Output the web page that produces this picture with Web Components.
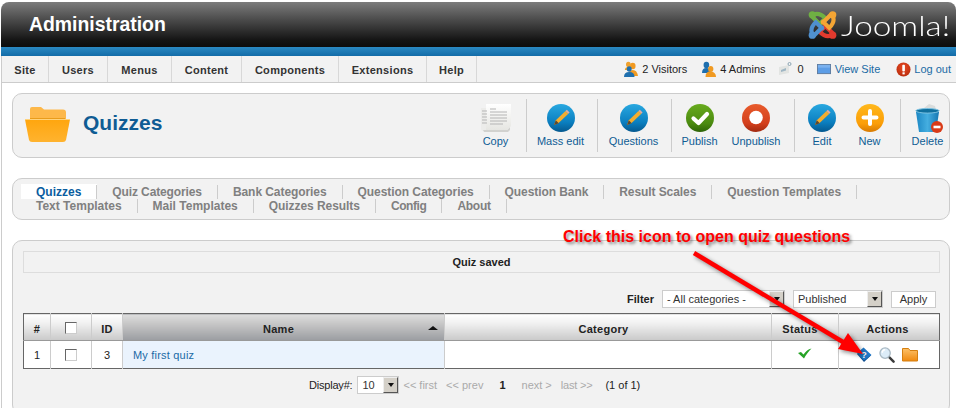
<!DOCTYPE html>
<html><head><meta charset="utf-8">
<style>
html,body{margin:0;padding:0;background:#fff}
body{width:957px;height:408px;overflow:hidden;font-family:"Liberation Sans",Arial,sans-serif}
</style></head>
<body>
<x-app></x-app>
<script>
const PIECE=c=>`<g stroke="${c}"><path d="M6 5Q12 2 18.500 8.500L12 15"/><path d="M5 7L13 15"/><circle cx="5" cy="5" r="3.800" fill="${c}" stroke="none"/></g>`;
const ICONS={
 pencilBall:`<svg width="32" height="30" viewBox="0 0 32 30"><defs><linearGradient id="b" x1="0" y1="0" x2="0" y2="1"><stop offset="0" stop-color="#29a8e0"/><stop offset=".65" stop-color="#0b7fc0"/><stop offset="1" stop-color="#05598f"/></linearGradient></defs><circle cx="16" cy="15" r="14" fill="url(#b)"/><path d="M9 22l1.800-4.800 9.700-9.200 2.800 2.800-9.700 9.200z" fill="#f3ad2f"/><path d="M20.500 8l1.300-1.300 2.800 2.800-1.300 1.300z" fill="#e9a9a0"/><path d="M9 22l1.800-4.800 3 3z" fill="#5d4a32"/></svg>`,
 publish:`<svg width="32" height="30" viewBox="0 0 32 30"><defs><linearGradient id="g" x1="0" y1="0" x2="0" y2="1"><stop offset="0" stop-color="#68ab1e"/><stop offset=".7" stop-color="#4b8a10"/><stop offset="1" stop-color="#2e6407"/></linearGradient></defs><circle cx="16" cy="15" r="14" fill="url(#g)"/><path d="M9.500 15.500l5 4.500 8.500-9" fill="none" stroke="#fff" stroke-width="4.200" stroke-linecap="round" stroke-linejoin="round"/></svg>`,
 unpublish:`<svg width="32" height="30" viewBox="0 0 32 30"><defs><linearGradient id="r" x1="0" y1="0" x2="0" y2="1"><stop offset="0" stop-color="#e85b2c"/><stop offset=".7" stop-color="#d33f1c"/><stop offset="1" stop-color="#a12a10"/></linearGradient></defs><circle cx="16" cy="15" r="14" fill="url(#r)"/><circle cx="16" cy="14.500" r="6.800" fill="#fff"/></svg>`,
 newBall:`<svg width="32" height="30" viewBox="0 0 32 30"><defs><linearGradient id="o" x1="0" y1="0" x2="0" y2="1"><stop offset="0" stop-color="#ffb81c"/><stop offset=".7" stop-color="#fb9e08"/><stop offset="1" stop-color="#d87b02"/></linearGradient></defs><circle cx="16" cy="15" r="14" fill="url(#o)"/><path d="M16 8v13M9.500 14.500h13" stroke="#fff" stroke-width="4" stroke-linecap="round"/></svg>`,
 copy:`<svg width="32" height="30" viewBox="0 0 32 30"><defs><linearGradient id="s" x1="0" y1="0" x2="0" y2="1"><stop offset="0" stop-color="#fff"/><stop offset="1" stop-color="#e6e6e2"/></linearGradient></defs><path d="M1 5h8v23H3q-2 0-2-2z" fill="#ececea"/><path d="M3 27h24l3-3v3l-2 2H4z" fill="#d2d2cf"/><path d="M6 1h25v22l-4 4H6z" fill="url(#s)"/><path d="M2 8h5M2 11h5M2 14h5M2 17h5M2 20h5" stroke="#b5b5b5"/><path d="M10 6h6M10 9h17M10 12h17M10 15h17M10 18h17M10 21h13" stroke="#b4b4b4"/></svg>`,
 trash:`<svg width="32" height="30" viewBox="0 0 32 30"><defs><linearGradient id="t" x1="0" y1="0" x2="1" y2="0"><stop offset="0" stop-color="#1c87c4"/><stop offset=".5" stop-color="#45aee0"/><stop offset="1" stop-color="#1677b2"/></linearGradient></defs><path d="M12 5l5-4 6 2 1 4H12z" fill="#d9dcdc"/><path d="M4 9h23l-3 20H7z" fill="url(#t)"/><ellipse cx="15.500" cy="7.800" rx="11.700" ry="2.300" fill="#0f6f9e" stroke="#7cc2e2"/><circle cx="25" cy="24" r="6" fill="#d93a17"/><rect x="21.500" y="22.700" width="7" height="2.600" fill="#fff"/></svg>`,
 folderBig:`<svg width="45" height="37" viewBox="0 0 45 37"><defs><linearGradient id="f" x1="0" y1="0" x2="0" y2="1"><stop offset="0" stop-color="#ffa60e"/><stop offset="1" stop-color="#ffb32f"/></linearGradient></defs><path d="M5 14V3q0-2 2-2h9l3 2.500h19q3 0 3 3V14z" fill="#fdb84a"/><path d="M5 12h35v3H5z" fill="#e99c1b"/><path d="M0 13.500h45L41 34q-.5 2-3 2H7q-2.500 0-3-2z" fill="url(#f)"/><path d="M0 13.500h45" stroke="#ffd27b"/></svg>`,
 joomla:`<svg width="31" height="30" viewBox="0 0 31 31" fill="none" stroke-width="4.300" stroke-linecap="round">${PIECE('#6fb043')}<g transform="rotate(180 15.500 15.500)">${PIECE('#e23a2e')}</g><g transform="rotate(270 15.500 15.500)">${PIECE('#4f90cf')}</g><g transform="rotate(90 15.500 15.500)">${PIECE('#f4a534')}</g></svg>`,
 users:`<svg width="14" height="16" viewBox="0 0 16 16" preserveAspectRatio="none"><circle cx="10" cy="5" r="3.200" fill="#f09a22"/><path d="M5 15q0-6 5-6t6 6z" fill="#f09a22"/><circle cx="5" cy="3.500" r="2.700" fill="#f0a12e"/><path d="M1 9q0-3 4-3l2 3z" fill="#e5a02e"/><circle cx="6" cy="8" r="2.800" fill="#1f6fae"/><path d="M0 16q0-5 6-5t6 5z" fill="#1f6fae"/></svg>`,
 admins:`<svg width="14" height="16" viewBox="0 0 16 16" preserveAspectRatio="none"><circle cx="5" cy="4" r="3.200" fill="#1f6fae"/><path d="M0 12q0-5 5-5t5 5z" fill="#1f6fae"/><circle cx="10" cy="8" r="3" fill="#f09a22"/><path d="M4 16q0-6 6-5.500t6 5.500z" fill="#f09a22"/></svg>`,
 msg:`<svg width="15" height="14" viewBox="0 0 15 14"><path d="M1 5l10-2v8l-10 2z" fill="#e2e4e2"/><path d="M3 8l5-2v2.500l-5 1.500z" fill="#9fb6c4"/><circle cx="11.500" cy="2" r="1.500" fill="none" stroke="#8ca5b3"/></svg>`,
 view:`<svg width="14" height="11" viewBox="0 0 15 12" preserveAspectRatio="none"><rect x=".5" y=".5" width="14" height="10" fill="#5c9de6" stroke="#5d7b9f"/><path d="M1 1h13v3H1z" fill="#7ab1ee"/></svg>`,
 logout:`<svg width="15" height="15" viewBox="0 0 16 16"><defs><radialGradient id="l" cx=".5" cy=".35" r=".7"><stop offset="0" stop-color="#e84a24"/><stop offset="1" stop-color="#b72b0b"/></radialGradient></defs><circle cx="8" cy="8" r="7.500" fill="url(#l)"/><rect x="6.700" y="3" width="2.800" height="7" rx="1" fill="#fff"/><rect x="6.900" y="11" width="2.400" height="2.200" fill="#fff"/></svg>`,
 check:`<svg width="14" height="11" viewBox="0 0 14 11"><path d="M0 5l3-1 2.500 2.500C8 3 10 1.500 13.500.5 10.500 3.500 8 6.500 6 10.500z" fill="#27a327"/></svg>`,
 book:`<svg width="16" height="16" viewBox="0 0 16 16"><path d="M1 7L8 1.500l7 7L8 15z" fill="#0f4d8d"/><path d="M1 6L7.500 0.500 15.500 8 8 13.500z" fill="#1f78c8"/><text x="8" y="11" font-family="Liberation Sans" font-size="9" font-weight="700" fill="#fff" text-anchor="middle">?</text></svg>`,
 magnifier:`<svg width="16" height="16" viewBox="0 0 17 17"><path d="M10.500 10.500l5 5" stroke="#3a3a3a" stroke-width="2.600" stroke-linecap="round"/><circle cx="6.500" cy="6.500" r="5.500" fill="#dcecf8" stroke="#a9b9c4" stroke-width="1.400"/><path d="M3.500 6a3 3 0 0 1 3-3" stroke="#fff" stroke-width="1.500" fill="none"/></svg>`,
 folder:`<svg width="16" height="15" viewBox="0 0 16 15"><defs><linearGradient id="h" x1="0" y1="0" x2="0" y2="1"><stop offset="0" stop-color="#fdc168"/><stop offset="1" stop-color="#f0890e"/></linearGradient></defs><path d="M.5 14V1.500h6l1.500 2h7.500V14z" fill="url(#h)" stroke="#d57f10"/></svg>`
};
function def(name,html,extra){
  const t=document.createElement('template');t.innerHTML=html;
  customElements.define(name,class extends HTMLElement{
    constructor(){super();this.attachShadow({mode:'open'}).appendChild(t.content.cloneNode(true));}
    connectedCallback(){extra&&extra.call(this)}
  });
}
def('x-icon',`<style>:host{display:inline-flex;line-height:0}</style><span id="i" style="display:inline-flex"></span>`,function(){
  this.shadowRoot.getElementById('i').innerHTML=ICONS[this.getAttribute('name')];
});
def('x-header',`<style>
:host{display:flex;align-items:center;justify-content:space-between;height:45px;border-radius:8px 8px 0 0;
background:linear-gradient(#7c7c7c,#4a4a4a 40%,#141414 85%,#0c0c0c);padding:0 6px 0 28px;box-sizing:border-box}
h1{margin:0 0 2px;font:700 19.400px/22px "Liberation Sans",sans-serif;color:#fff}
.logo{display:flex;align-items:center;gap:3px}
.t{display:block;width:109px;font:300 28px/30px Lato,"Open Sans",sans-serif;color:#fff;white-space:nowrap;transform:scaleX(1.19);transform-origin:left center}
</style><h1>Administration</h1><div class="logo"><x-icon name="joomla"></x-icon><span class="t">Joomla!</span></div>`);
def('x-band',`<style>:host{display:block;height:9px;background:linear-gradient(#2a89c2,#136ca8)}</style>`);
def('x-menubar',`<style>
:host{display:flex;justify-content:space-between;height:26px;background:#f2f2f2;border-bottom:1px solid #ccc;border-left:1px solid #ccc}
.l{display:flex}.r{display:flex;align-items:center;padding-right:5px}
</style><div class="l"><slot name="m"></slot></div><div class="r"><slot name="s"></slot></div>`);
def('x-mi',`<style>:host{display:block;box-sizing:border-box;text-align:center;border-right:1px solid #d8d8d8;font:700 11px/28px "Liberation Sans",sans-serif;letter-spacing:.3px;color:#333}</style><slot></slot>`);
def('x-st',`<style>:host{display:inline-flex;align-items:center;gap:4px;font:11px/14px "Liberation Sans",sans-serif;color:#222}
:host([link]){color:#1a6aa5}</style><slot></slot>`);
def('x-panel',`<style>:host{display:block;box-sizing:border-box;width:938px;background:#f2f2f2;border:1px solid #ccc;border-radius:10px;margin-left:10px}</style><slot></slot>`);
def('x-toolbar',`<style>:host{display:flex;align-items:flex-start;height:63px;box-sizing:border-box;padding:5px 0 0 12px}
.t{display:flex;align-items:flex-start;gap:13px;flex:1}
h2{margin:11px 0 0;font:700 21px/26px "Liberation Sans",sans-serif;color:#0f5c94}
.i{display:flex;margin-top:7px}
.tools{display:flex}
</style><div class="t"><span class="i"><x-icon name="folderBig"></x-icon></span><h2>Quizzes</h2></div><div class="tools"><slot></slot></div>`);
def('x-tool',`<style>:host{display:flex;flex-direction:column;align-items:center;box-sizing:border-box;height:53px;padding-top:4px;font:11px/12px "Liberation Sans",sans-serif;color:#0f5c94;white-space:nowrap}
:host([sep]){border-right:1px solid #ccc}
.l{margin-top:2px}</style><slot name="i"></slot><span class="l"><slot></slot></span>`);
def('x-tabs',`<style>:host{display:flex;flex-wrap:wrap;align-content:flex-start;height:40px;box-sizing:border-box;padding:6px 40px 0 8px}</style><slot></slot>`);
def('x-tab',`<style>:host{display:block;padding:0 15px;height:14px;border-right:1px solid #ccc;font:700 12px/14px "Liberation Sans",sans-serif;color:#808080;white-space:nowrap}
:host([active]){background:#fff;color:#0b5da0;box-shadow:0 -1px 0 #fff}</style><slot></slot>`);
def('x-msg',`<style>:host{display:block;height:22px;box-sizing:border-box;margin:10px 9px 0 10px;background:#f2f2f2;border:1px solid #ddd;text-align:center;font:700 11px/21px "Liberation Sans",sans-serif;color:#222}</style><slot></slot>`);
def('x-select',`<style>:host{display:inline-flex;align-items:center;justify-content:space-between;box-sizing:border-box;height:18px;background:#fff;border:1px solid #ccc;padding:0 0 0 4px;font:11px/16px "Liberation Sans",sans-serif;color:#333}
b{display:flex;align-items:center;justify-content:center;width:15px;height:16px;box-sizing:border-box;background:#d4d0c8;border:1px solid;border-color:#eee #555 #555 #eee}
i{display:block;border:3px solid transparent;border-top:4px solid #111;border-bottom:0}</style><span><slot></slot></span><b><i></i></b>`);
def('x-filter',`<style>:host{display:flex;align-items:center;justify-content:flex-end;height:18px;margin:17px 13px 5px 0}
.f{font:700 11px/14px "Liberation Sans",sans-serif;color:#222;margin-right:8px}
.a{box-sizing:border-box;width:45px;height:17px;margin-left:8px;background:#fff;border:1px solid #ccc;text-align:center;font:11px/15px "Liberation Sans",sans-serif;color:#333}
</style><span class="f">Filter</span><x-select style="width:123px">- All categories -</x-select><x-select style="width:90px;margin-left:8px">Published</x-select><span class="a">Apply</span>`);
def('x-cb',`<style>:host{display:inline-block;width:12px;height:12px;box-sizing:border-box;background:#fff;border:1px solid;border-color:#666 #ccc #ccc #666;vertical-align:middle}</style>`);
def('x-table',`<style>
:host{display:block;margin:0 10px;width:917px}
table{border-collapse:collapse;table-layout:fixed;width:917px;border:1px solid #666;font:11px "Liberation Sans",sans-serif;color:#222}
th{height:27px;box-sizing:border-box;padding:4px 0 0;font-weight:700;font-size:11px;letter-spacing:.3px;border-right:1px solid #ccc;border-bottom:1px solid #999;background:linear-gradient(#fff,#f0f0f0 35%,#c9c9c9);position:relative}
th.c{padding-top:0}
th.s{background:linear-gradient(#dedede,#c4c4c4 40%,#9a9da1)}
th.s i{position:absolute;right:6px;top:12px;border:5px solid transparent;border-bottom:4px solid #111;border-top:0}
td{height:27px;padding:0;text-align:center;border-right:1px solid #ccc;background:#fff}
td.n{background:#eaf3fd;text-align:left;padding-left:10px;color:#1a6aa5;letter-spacing:.2px}
.acts{display:flex;align-items:center;gap:7px;padding-left:17px}
th:last-child,td:last-child{border-right:0}
</style><table><colgroup><col style="width:27px"><col style="width:41px"><col style="width:31px"><col style="width:322px"><col style="width:327px"><col style="width:67px"><col></colgroup>
<tr><th>#</th><th class="c"><x-cb></x-cb></th><th>ID</th><th class="s" style="padding-right:10px">Name<i></i></th><th style="padding-right:9px">Category</th><th style="padding-right:10px">Status</th><th style="padding-right:3px">Actions</th></tr>
<tr><td>1</td><td><x-cb></x-cb></td><td>3</td><td class="n">My first quiz</td><td></td><td><x-icon name="check"></x-icon></td><td><div class="acts"><x-icon name="book"></x-icon><x-icon name="magnifier"></x-icon><x-icon name="folder"></x-icon></div></td></tr></table>`);
def('x-pager',`<style>:host{display:flex;align-items:center;height:18px;margin-top:7px;padding-left:296px;font:11px/14px "Liberation Sans",sans-serif;color:#222;padding-bottom:20px}
span{white-space:nowrap}.g{color:#aaa}</style>
<span style="margin-right:5px;letter-spacing:-.2px">Display#:</span><x-select style="width:42px">10</x-select><span class="g" style="margin-left:4px">&lt;&lt; first</span><span class="g" style="margin-left:9px">&lt;&lt; prev</span><span style="margin-left:16px;font-weight:700">1</span><span class="g" style="margin-left:16px">next &gt;</span><span class="g" style="margin-left:9px;letter-spacing:-.2px">last &gt;&gt;</span><span style="margin-left:13px">(1 of 1)</span>`);
def('x-callout',`<style>:host{display:block;position:absolute;left:0;top:0;width:957px;height:408px;pointer-events:none}
.c{position:absolute;left:563px;top:228px;font:700 16px/18px "Liberation Sans",sans-serif;color:#f00;white-space:nowrap;text-shadow:2px 2px 3px rgba(0,0,0,.45)}
svg{position:absolute;left:0;top:0;filter:drop-shadow(2px 2px 2px rgba(0,0,0,.45))}</style>
<span class="c">Click this icon to open quiz questions</span>
<svg width="957" height="408"><path d="M694 253L848 345" stroke="#f00" stroke-width="4.500"/><path d="M838 349L848 333L863 354z" fill="#f00"/></svg>`);
def('x-app',`<style>:host{display:block;position:relative;width:957px;height:408px;overflow:hidden}
.w{padding:2px 1px 0}
.gap1{height:10px}.gap2{height:20px}
.b{border-left:1px solid #ccc}
</style><div class="w"><x-header></x-header><x-band></x-band>
<x-menubar>
<x-mi slot="m" style="width:47px">Site</x-mi><x-mi slot="m" style="width:59px">Users</x-mi><x-mi slot="m" style="width:64px">Menus</x-mi><x-mi slot="m" style="width:70px">Content</x-mi><x-mi slot="m" style="width:97px">Components</x-mi><x-mi slot="m" style="width:88px">Extensions</x-mi><x-mi slot="m" style="width:50px">Help</x-mi>
<x-st slot="s"><x-icon name="users"></x-icon>2 Visitors</x-st>
<x-st slot="s" style="margin-left:15px"><x-icon name="admins"></x-icon>4 Admins</x-st>
<x-st slot="s" style="margin-left:12px;gap:5px"><x-icon name="msg"></x-icon>0</x-st>
<x-st slot="s" style="margin-left:13px" link><x-icon name="view"></x-icon>View Site</x-st>
<x-st slot="s" style="margin-left:16px;gap:3px" link><x-icon name="logout"></x-icon>Log out</x-st>
</x-menubar>
<div class="b"><div class="gap1"></div>
<x-panel><x-toolbar>
<x-tool sep style="width:62px"><x-icon slot="i" name="copy"></x-icon>Copy</x-tool>
<x-tool sep style="width:71px;padding-right:3px"><x-icon slot="i" name="pencilBall"></x-icon>Mass edit</x-tool>
<x-tool sep style="width:74px;padding-right:2px"><x-icon slot="i" name="pencilBall"></x-icon>Questions</x-tool>
<x-tool style="width:55px"><x-icon slot="i" name="publish"></x-icon>Publish</x-tool>
<x-tool sep style="width:68px;padding-right:9px"><x-icon slot="i" name="unpublish"></x-icon>Unpublish</x-tool>
<x-tool style="width:54px"><x-icon slot="i" name="pencilBall"></x-icon>Edit</x-tool>
<x-tool sep style="width:52px;padding-right:10px"><x-icon slot="i" name="newBall"></x-icon>New</x-tool>
<x-tool style="width:48px;padding-left:5px"><x-icon slot="i" name="trash"></x-icon>Delete</x-tool>
</x-toolbar></x-panel>
<div class="gap2"></div>
<x-panel><x-tabs>
<x-tab active>Quizzes</x-tab><x-tab style="letter-spacing:-.12px">Quiz Categories</x-tab><x-tab style="letter-spacing:-.07px">Bank Categories</x-tab><x-tab style="letter-spacing:-.07px">Question Categories</x-tab><x-tab style="letter-spacing:-.08px">Question Bank</x-tab><x-tab style="letter-spacing:-.08px">Result Scales</x-tab><x-tab>Question Templates</x-tab><x-tab>Text Templates</x-tab><x-tab>Mail Templates</x-tab><x-tab style="letter-spacing:-.06px">Quizzes Results</x-tab><x-tab style="letter-spacing:-.4px">Config</x-tab><x-tab style="letter-spacing:-.3px">About</x-tab>
</x-tabs></x-panel>
<div class="gap2"></div>
<x-panel><x-msg>Quiz saved</x-msg><x-filter></x-filter><x-table></x-table><x-pager></x-pager></x-panel>
</div></div>
<x-callout></x-callout>`);
</script>
</body></html>
